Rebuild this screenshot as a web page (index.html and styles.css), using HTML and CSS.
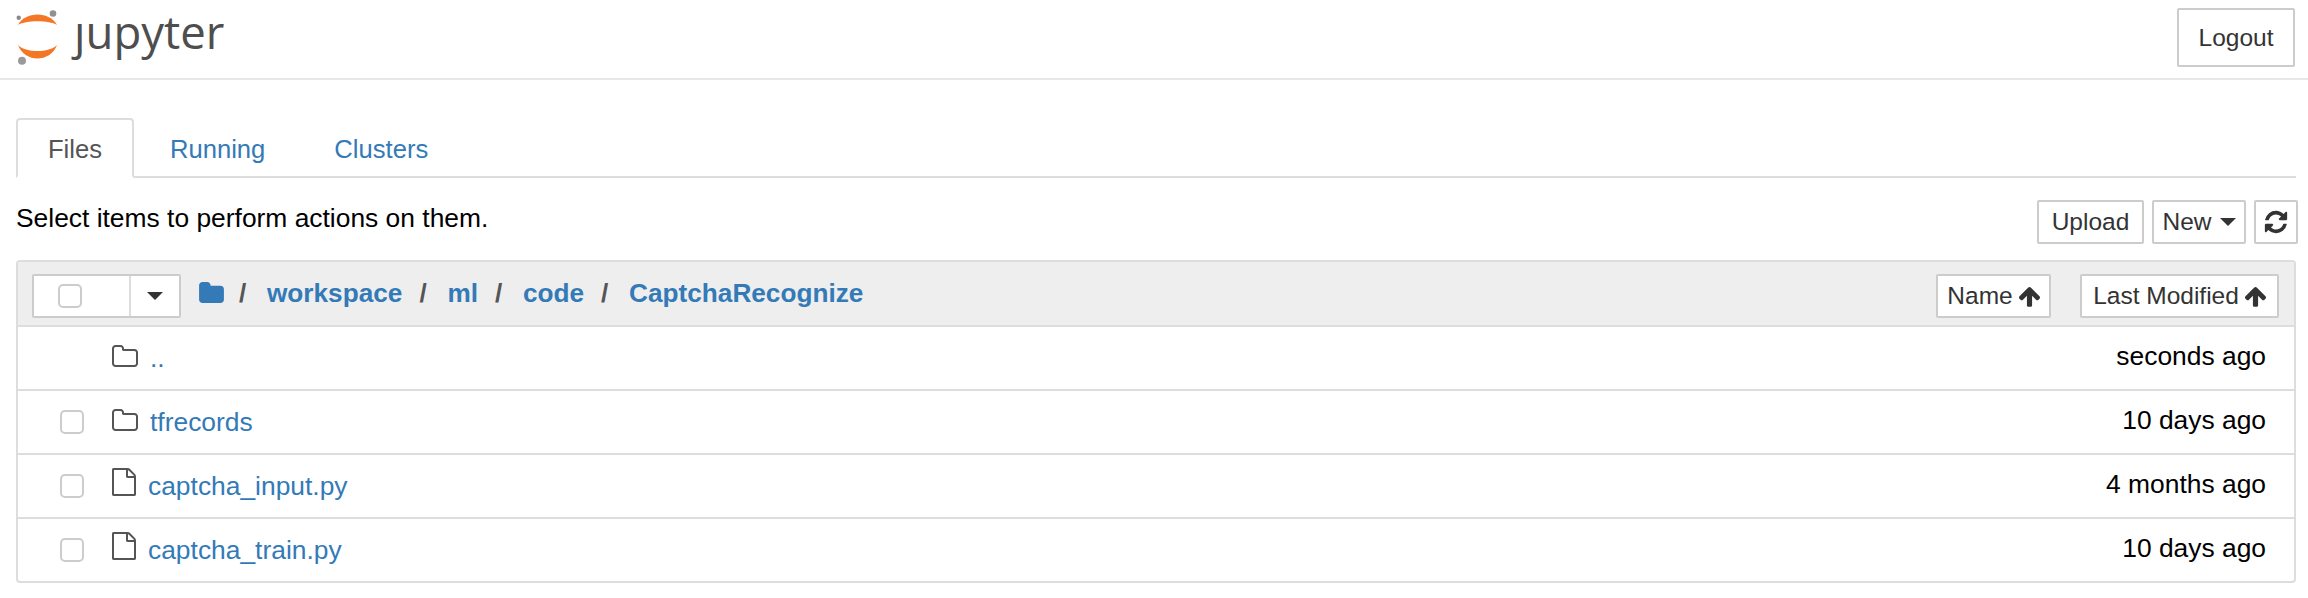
FILE: index.html
```html
<!DOCTYPE html>
<html lang="en">
<head>
    <meta charset="UTF-8">
    <title>Home</title>
    <link rel="stylesheet" href="styles.css">
</head>
<body>
    <header class="topbar">
        <a class="logo" href="#" aria-label="jupyter">
            <svg class="logo-mark" viewBox="0 0 50 56" width="50" height="56">
                <path d="M2 15C9 1 34 1 41 15C33 10 10 10 2 15Z" fill="#f37726"/>
                <path d="M2 35C9 53 34 53 41 35C33 43 10 43 2 35Z" fill="#f37726"/>
                <circle cx="37" cy="3.5" r="3.3" fill="#909090"/>
                <circle cx="2.7" cy="7.7" r="2.2" fill="#8a8a8a"/>
                <circle cx="6" cy="50.7" r="4" fill="#9a9a9a"/>
            </svg>
            <span class="logo-text">ȷupyter</span>
        </a>
        <button class="btn btn-logout">Logout</button>
    </header>
    <main class="page">
        <nav class="tabs">
            <a class="tab active" href="#">Files</a>
            <a class="tab" href="#">Running</a>
            <a class="tab" href="#">Clusters</a>
        </nav>
        <div class="toolbar">
            <span>Select items to perform actions on them.</span>
            <div class="toolbar-btns">
                <button class="btn btn-upload">Upload</button>
                <button class="btn btn-new">New <i class="caret"></i></button>
                <button class="btn btn-refresh">
                    <svg viewBox="0 0 1792 1792" width="26" height="26"><path d="M1639 1056q0 5-1 7-64 268-268 434.5t-478 166.5q-146 0-282.5-55t-243.5-157l-129 129q-19 19-45 19t-45-19-19-45v-448q0-26 19-45t45-19h448q26 0 45 19t19 45-19 45l-137 137q71 66 161 102t187 36q134 0 250-65t186-179q11-17 53-117 8-23 30-23h192q13 0 22.5 9.5t9.5 22.5zm25-800v448q0 26-19 45t-45 19h-448q-26 0-45-19t-19-45 19-45l138-138q-148-137-349-137-134 0-250 65t-186 179q-11 17-53 117-8 23-30 23h-199q-13 0-22.5-9.5t-9.5-22.5v-7q65-268 270-434.5t480-166.5q146 0 284 55.5t245 156.5l130-129q19-19 45-19t45 19 19 45z"/></svg>
                </button>
            </div>
        </div>
        <section class="panel">
            <div class="panel-head">
                <div class="select-group">
                    <span class="select-box"><i class="check"></i></span>
                    <span class="select-drop"><i class="caret"></i></span>
                </div>
                <svg class="crumb-icon" viewBox="64 128 1664 1408" width="25" height="21"><path d="M1728 608v704q0 92-66 158t-158 66h-1216q-92 0-158-66t-66-158v-960q0-92 66-158t158-66h320q92 0 158 66t66 158v32h672q92 0 158 66t66 158z"/></svg>
                <div class="crumbs">
                    <span class="sep">/</span><a href="#">workspace</a>
                    <span class="sep">/</span><a href="#">ml</a>
                    <span class="sep">/</span><a href="#">code</a>
                    <span class="sep">/</span><a href="#">CaptchaRecognize</a>
                </div>
                <button class="btn btn-sort btn-name">Name
                    <svg viewBox="117 128 1558 1536" width="21" height="21"><path d="M1675 971q0 51-37 90l-75 75q-38 38-91 38-54 0-90-38l-294-293v704q0 52-37.5 84.5t-90.5 32.5h-128q-53 0-90.5-32.5t-37.5-84.5v-704l-294 293q-36 38-90 38t-90-38l-75-75q-38-38-38-90 0-53 38-91l651-651q35-37 90-37 54 0 91 37l651 651q37 39 37 91z"/></svg>
                </button>
                <button class="btn btn-sort btn-modified">Last Modified
                    <svg viewBox="117 128 1558 1536" width="21" height="21"><path d="M1675 971q0 51-37 90l-75 75q-38 38-91 38-54 0-90-38l-294-293v704q0 52-37.5 84.5t-90.5 32.5h-128q-53 0-90.5-32.5t-37.5-84.5v-704l-294 293q-36 38-90 38t-90-38l-75-75q-38-38-38-90 0-53 38-91l651-651q35-37 90-37 54 0 91 37l651 651q37 39 37 91z"/></svg>
                </button>
            </div>
            <div class="row">
                <span class="row-check"></span>
                <svg class="row-icon" viewBox="64 128 1664 1408" width="26" height="22"><path d="M1600 1312v-704q0-40-28-68t-68-28h-704q-40 0-68-28t-28-68v-64q0-40-28-68t-68-28h-320q-40 0-68 28t-28 68v960q0 40 28 68t68 28h1216q40 0 68-28t28-68zm128-704v704q0 92-66 158t-158 66h-1216q-92 0-158-66t-66-158v-960q0-92 66-158t158-66h320q92 0 158 66t66 158v32h672q92 0 158 66t66 158z"/></svg>
                <a class="row-link" href="#">..</a>
                <span class="row-time">seconds ago</span>
            </div>
            <div class="row">
                <span class="row-check"><i class="check"></i></span>
                <svg class="row-icon" viewBox="64 128 1664 1408" width="26" height="22"><path d="M1600 1312v-704q0-40-28-68t-68-28h-704q-40 0-68-28t-28-68v-64q0-40-28-68t-68-28h-320q-40 0-68 28t-28 68v960q0 40 28 68t68 28h1216q40 0 68-28t28-68zm128-704v704q0 92-66 158t-158 66h-1216q-92 0-158-66t-66-158v-960q0-92 66-158t158-66h320q92 0 158 66t66 158v32h672q92 0 158 66t66 158z"/></svg>
                <a class="row-link" href="#">tfrecords</a>
                <span class="row-time">10 days ago</span>
            </div>
            <div class="row">
                <span class="row-check"><i class="check"></i></span>
                <svg class="row-icon file" viewBox="128 0 1536 1792" width="24" height="28"><path d="M1596 380q28 28 48 76t20 88v1152q0 40-28 68t-68 28h-1344q-40 0-68-28t-28-68v-1600q0-40 28-68t68-28h896q40 0 88 20t76 48zm-444-244v376h376q-10-29-22-41l-313-313q-12-12-41-22zm384 1528v-1024h-416q-40 0-68-28t-28-68v-416h-768v1536h1280z"/></svg>
                <a class="row-link" href="#">captcha_input.py</a>
                <span class="row-time">4 months ago</span>
            </div>
            <div class="row">
                <span class="row-check"><i class="check"></i></span>
                <svg class="row-icon file" viewBox="128 0 1536 1792" width="24" height="28"><path d="M1596 380q28 28 48 76t20 88v1152q0 40-28 68t-68 28h-1344q-40 0-68-28t-28-68v-1600q0-40 28-68t68-28h896q40 0 88 20t76 48zm-444-244v376h376q-10-29-22-41l-313-313q-12-12-41-22zm384 1528v-1024h-416q-40 0-68-28t-28-68v-416h-768v1536h1280z"/></svg>
                <a class="row-link" href="#">captcha_train.py</a>
                <span class="row-time">10 days ago</span>
            </div>
        </section>
    </main>
</body>
</html>
```

FILE: styles.css
```css
* {
    box-sizing: border-box;
}
body {
    font-family: "Liberation Sans", Arial, sans-serif;
    font-size: 26.4px;
    margin: 0;
    padding: 0;
    background-color: #fff;
    color: #000;
}
a {
    color: #337ab7;
    text-decoration: none;
}
.topbar {
    height: 80px;
    display: flex;
    align-items: flex-start;
    justify-content: space-between;
    padding: 8px 13px 0 16px;
    border-bottom: 2px solid #e7e7e7;
}
.logo {
    display: flex;
    align-items: flex-start;
    color: #4e4e4e;
}
.logo-mark {
    margin-top: 2px;
}
.logo-text {
    font-family: "Open Sans", sans-serif;
    font-size: 45.5px;
    line-height: 46px;
    margin-left: 8px;
}
.btn {
    font-family: inherit;
    font-size: 24.5px;
    color: #333;
    background: #fff;
    border: 2px solid #ccc;
    border-radius: 2px;
    padding: 0;
    height: 44px;
    display: inline-flex;
    align-items: center;
    justify-content: center;
}
.btn-logout {
    width: 118px;
    height: 59px;
}
.page {
    padding: 38px 12px 0 16px;
}
.tabs {
    display: flex;
    height: 60px;
    border-bottom: 2px solid #ddd;
}
.tab {
    height: 60px;
    padding: 0 30px;
    margin-right: 5px;
    font-size: 25.6px;
    line-height: 58px;
    border: 2px solid transparent;
    border-radius: 4px 4px 0 0;
    white-space: nowrap;
}
.tab.active {
    color: #555;
    background: #fff;
    border-color: #ddd #ddd #fff;
    width: 118px;
    margin-right: 4px;
    text-align: center;
    padding: 0;
}
.toolbar {
    display: flex;
    justify-content: space-between;
    align-items: flex-start;
    height: 82px;
    padding-top: 22px;
}
.toolbar span {
    line-height: 30px;
    margin-top: 3px;
}
.toolbar-btns {
    display: flex;
    gap: 8px;
    margin-right: -2px;
}
.btn-upload {
    width: 107px;
}
.btn-new {
    width: 94px;
    gap: 8px;
}
.btn-refresh {
    width: 44px;
}
.btn-refresh svg {
    fill: #333;
}
.caret {
    display: inline-block;
    width: 0;
    height: 0;
    border-top: 8px solid #333;
    border-left: 8px solid transparent;
    border-right: 8px solid transparent;
}
.panel {
    border: 2px solid #ddd;
    border-radius: 4px;
}
.panel-head {
    height: 65px;
    background: #eee;
    display: flex;
    align-items: center;
    padding: 5px 15px 0 14px;
    border-bottom: 2px solid #ddd;
}
.select-group {
    display: flex;
    width: 149px;
    height: 44px;
    background: #fff;
    border: 2px solid #ccc;
    border-radius: 2px;
}
.select-box {
    width: 97px;
    display: flex;
    align-items: center;
    padding-left: 24px;
    border-right: 2px solid #ddd;
}
.select-drop {
    flex: 1;
    display: flex;
    align-items: center;
    justify-content: center;
}
.check {
    display: block;
    width: 24px;
    height: 24px;
    border: 2px solid #ccc;
    border-radius: 5px;
    background: #fff;
}
.crumb-icon {
    fill: #337ab7;
    margin: -7px 0 0 18px;
}
.crumbs {
    flex: 1;
    display: flex;
    align-items: center;
    font-size: 26.2px;
    font-weight: bold;
    margin-top: -6px;
    margin-left: 15px;
    white-space: pre;
}
.crumbs .sep {
    color: #555;
    width: 10px;
    margin-right: 18px;
}
.crumbs a {
    margin-right: 17px;
}
.btn-sort {
    gap: 6px;
    flex: none;
}
.btn-name {
    width: 115px;
    margin-right: 29px;
}
.btn-modified {
    width: 199px;
}
.btn-sort svg {
    fill: #333;
}
.row {
    height: 64px;
    display: flex;
    align-items: center;
    border-bottom: 2px solid #ddd;
    padding-right: 28px;
}
.row:last-child {
    height: 62px;
    border-bottom: 0;
}
.row-check {
    width: 94px;
    padding-left: 42px;
}
.row-icon {
    fill: #555;
    margin-top: -4px;
}
.row-icon.file {
    margin-top: -9px;
}
.row-link {
    margin-left: 12px;
    flex: 1;
}
.row-time {
    margin-top: -4px;
}
```
